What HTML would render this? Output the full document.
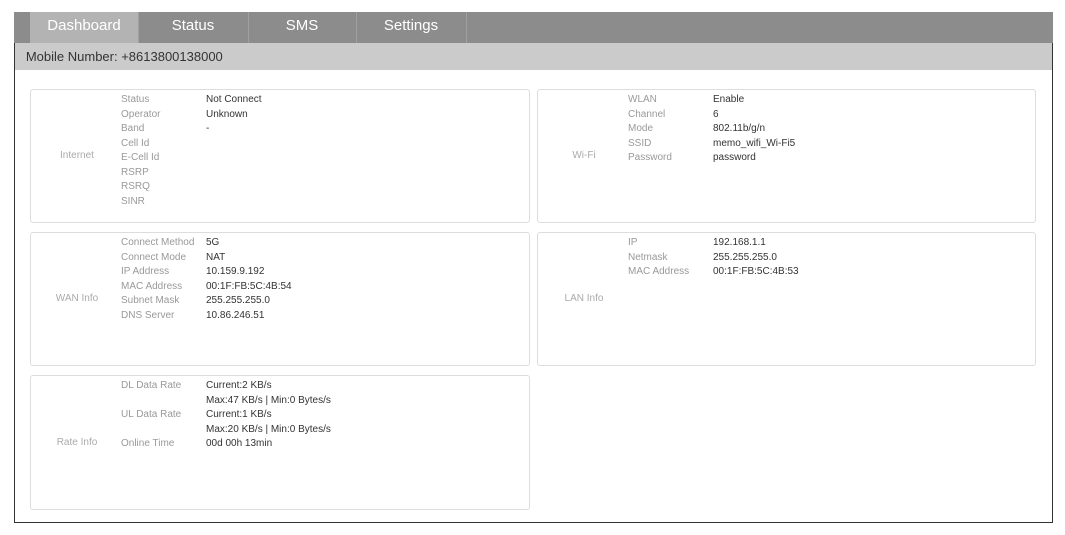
<!DOCTYPE html>
<html><head><meta charset="utf-8"><style>
body{margin:0;background:#fff;font-family:"Liberation Sans",sans-serif;}
.frame{position:absolute;left:14px;top:43px;width:1037px;height:479px;border:1px solid #333;border-top:none;}
.nav{position:absolute;left:14px;top:12px;width:1039px;height:31px;background:#8c8c8c;}
.tab{position:absolute;top:0;height:31px;line-height:27px;color:#fff;font-size:15px;text-align:center;border-right:1px solid #a0a0a0;}
.mob{position:absolute;left:15px;top:43px;width:1037px;height:27px;background:#cbcbcb;font-size:13px;color:#333;line-height:28px;}
.box{position:absolute;border:1px solid #ddd;border-radius:3px;height:132px;width:498px;}
.lab{position:absolute;left:0;width:92px;text-align:center;font-size:10px;color:#aaa;top:50%;margin-top:-6px;}
.k,.v{position:absolute;top:3px;font-size:10px;line-height:14.5px;}
.k{color:#999;left:90px}.v{color:#333;left:175px}
</style></head><body>
<div class="nav">
<div class="tab" style="left:16px;width:108px;background:#b3b3b3">Dashboard</div>
<div class="tab" style="left:124px;width:110px">Status</div>
<div class="tab" style="left:234px;width:108px">SMS</div>
<div class="tab" style="left:342px;width:110px">Settings</div>
</div>
<div class="mob">&nbsp;&nbsp;&nbsp;Mobile Number: +8613800138000</div>
<div class="frame"></div>

<div class="box" style="left:30px;top:89px"><div class="lab">Internet</div>
<div class="k">Status<br>Operator<br>Band<br>Cell Id<br>E-Cell Id<br>RSRP<br>RSRQ<br>SINR</div>
<div class="v">Not Connect<br>Unknown<br>-</div></div>

<div class="box" style="left:537px;top:89px;width:497px"><div class="lab">Wi-Fi</div>
<div class="k">WLAN<br>Channel<br>Mode<br>SSID<br>Password</div>
<div class="v">Enable<br>6<br>802.11b/g/n<br>memo_wifi_Wi-Fi5<br>password</div></div>

<div class="box" style="left:30px;top:232px"><div class="lab">WAN Info</div>
<div class="k">Connect Method<br>Connect Mode<br>IP Address<br>MAC Address<br>Subnet Mask<br>DNS Server</div>
<div class="v">5G<br>NAT<br>10.159.9.192<br>00:1F:FB:5C:4B:54<br>255.255.255.0<br>10.86.246.51</div></div>

<div class="box" style="left:537px;top:232px;width:497px"><div class="lab">LAN Info</div>
<div class="k">IP<br>Netmask<br>MAC Address</div>
<div class="v">192.168.1.1<br>255.255.255.0<br>00:1F:FB:5C:4B:53</div></div>

<div class="box" style="left:30px;top:375px;height:133px"><div class="lab">Rate Info</div>
<div class="k">DL Data Rate<br><br>UL Data Rate<br><br>Online Time</div>
<div class="v">Current:2 KB/s<br>Max:47 KB/s | Min:0 Bytes/s<br>Current:1 KB/s<br>Max:20 KB/s | Min:0 Bytes/s<br>00d 00h 13min</div></div>
</body></html>
